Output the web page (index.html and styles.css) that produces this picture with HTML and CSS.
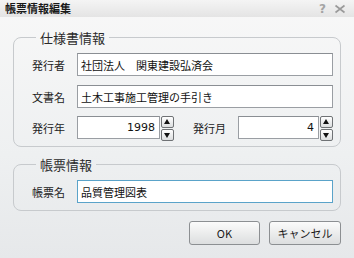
FILE: index.html
```html
<!DOCTYPE html>
<html lang="ja">
<head>
    <meta charset="utf-8">
    <title>帳票情報編集</title>
    <link rel="stylesheet" href="styles.css">
</head>
<body>
    <div class="dialog">
        <div class="titlebar">
            <span class="title">帳票情報編集</span>
            <span class="tools">
                <span class="help">?</span>
                <svg class="close" width="12" height="10" viewBox="0 0 12 10">
                    <path d="M1.5 1.5 L10.5 8.5 M10.5 1.5 L1.5 8.5" stroke="#9a9a9a" stroke-width="1.6" fill="none"/>
                </svg>
            </span>
        </div>

        <form class="body" action="#" method="post">
            <fieldset class="group spec">
                <legend>仕様書情報</legend>
                <div class="row">
                    <label for="publisher">発行者</label>
                    <input id="publisher" class="text wide" type="text" value="社団法人　関東建設弘済会">
                </div>
                <div class="row">
                    <label for="docname">文書名</label>
                    <input id="docname" class="text wide" type="text" value="土木工事施工管理の手引き">
                </div>
                <div class="row">
                    <label for="year">発行年</label>
                    <input id="year" class="text num" type="text" value="1998">
                    <span class="spin"><span class="up"></span><span class="down"></span></span>
                    <label class="second" for="month">発行月</label>
                    <input id="month" class="text num" type="text" value="4">
                    <span class="spin"><span class="up"></span><span class="down"></span></span>
                </div>
            </fieldset>

            <fieldset class="group form">
                <legend>帳票情報</legend>
                <div class="row">
                    <label for="formname">帳票名</label>
                    <input id="formname" class="text wide focus" type="text" value="品質管理図表">
                </div>
            </fieldset>

            <div class="buttons">
                <button type="submit" class="ok">OK</button>
                <button type="button" class="cancel">キャンセル</button>
            </div>
        </form>
    </div>
</body>
</html>
```

FILE: styles.css
```css
html, body {
    margin: 0;
    padding: 0;
}

body {
    width: 354px;
    height: 258px;
    font-family: "Noto Sans CJK JP", "Liberation Sans", sans-serif;
    color: #222;
    overflow: hidden;
}

.dialog {
    height: 258px;
    background: linear-gradient(#f8f8f8, #eef0f1 60%, #e6e8ea);
}

.titlebar {
    height: 17px;
    display: flex;
    align-items: center;
    justify-content: space-between;
    padding: 0 8px 0 5px;
    background: linear-gradient(#f4f4f4, #e4e4e4);
}

.title {
    font-size: 11px;
    font-weight: bold;
    line-height: 17px;
    color: #1a1a1a;
}

.tools {
    display: flex;
    align-items: center;
    gap: 8px;
}

.help {
    font-family: "DejaVu Sans", sans-serif;
    font-size: 12px;
    font-weight: bold;
    color: #a4a4a4;
    line-height: 12px;
}

.body {
    padding: 13px 13px 0 13px;
}

.group {
    margin: 0;
    padding: 8px 7px 7px 18px;
    border: 1px solid #c7cacd;
    border-radius: 8px;
    width: 328px;
    box-sizing: border-box;
}

.group legend {
    font-size: 13px;
    line-height: 15px;
    padding: 0 4px;
    margin-left: 4px;
    color: #2a2a2a;
}

.group.form {
    margin-top: 10px;
}

.row {
    display: flex;
    align-items: center;
    height: 23px;
}

.row + .row {
    margin-top: 9px;
}

.row + .row + .row {
    margin-top: 8px;
}

label {
    width: 45px;
    flex: none;
    font-size: 11px;
    color: #222;
}

label.second {
    margin-left: 19px;
}

.text {
    height: 23px;
    box-sizing: border-box;
    border: 1px solid #9a9ea3;
    border-top-color: #8a8e93;
    background: #fff;
    font-family: "Noto Sans CJK JP", "Liberation Sans", sans-serif;
    font-size: 11px;
    color: #111;
    padding: 0 3px;
    margin: 0;
    outline: none;
}

.wide {
    width: 256px;
}

.num {
    width: 83px;
    text-align: right;
    font-family: "DejaVu Sans", "Noto Sans CJK JP", sans-serif;
    font-size: 11px;
    padding-right: 4px;
}

#month {
    width: 81px;
}

.focus {
    border-color: #5aa3c9;
}

.spin {
    display: flex;
    flex-direction: column;
    gap: 1px;
    margin-left: 1px;
    margin-top: 2px;
}

.spin span {
    width: 11px;
    height: 10px;
    border: 1px solid #6f7275;
    border-radius: 2px;
    background: linear-gradient(#ffffff, #dcdedf);
    position: relative;
}

.spin span::after {
    content: "";
    position: absolute;
    left: 2px;
    width: 0;
    height: 0;
    border-left: 3.5px solid transparent;
    border-right: 3.5px solid transparent;
}

.spin .up::after {
    top: 2px;
    border-bottom: 5px solid #111;
}

.spin .down::after {
    top: 3px;
    border-top: 5px solid #111;
}

.buttons {
    display: flex;
    justify-content: flex-end;
    gap: 9px;
    margin-top: 10px;
    width: 328px;
}

.buttons button {
    height: 24px;
    border: 1px solid #8c8f92;
    border-radius: 3px;
    background: linear-gradient(#fbfbfb, #eceded 50%, #dcdedf);
    font-family: "Noto Sans CJK JP", "Liberation Sans", sans-serif;
    font-size: 11px;
    color: #1a1a1a;
    padding: 0;
}

.ok {
    width: 71px;
}

.cancel {
    width: 72px;
}
```
